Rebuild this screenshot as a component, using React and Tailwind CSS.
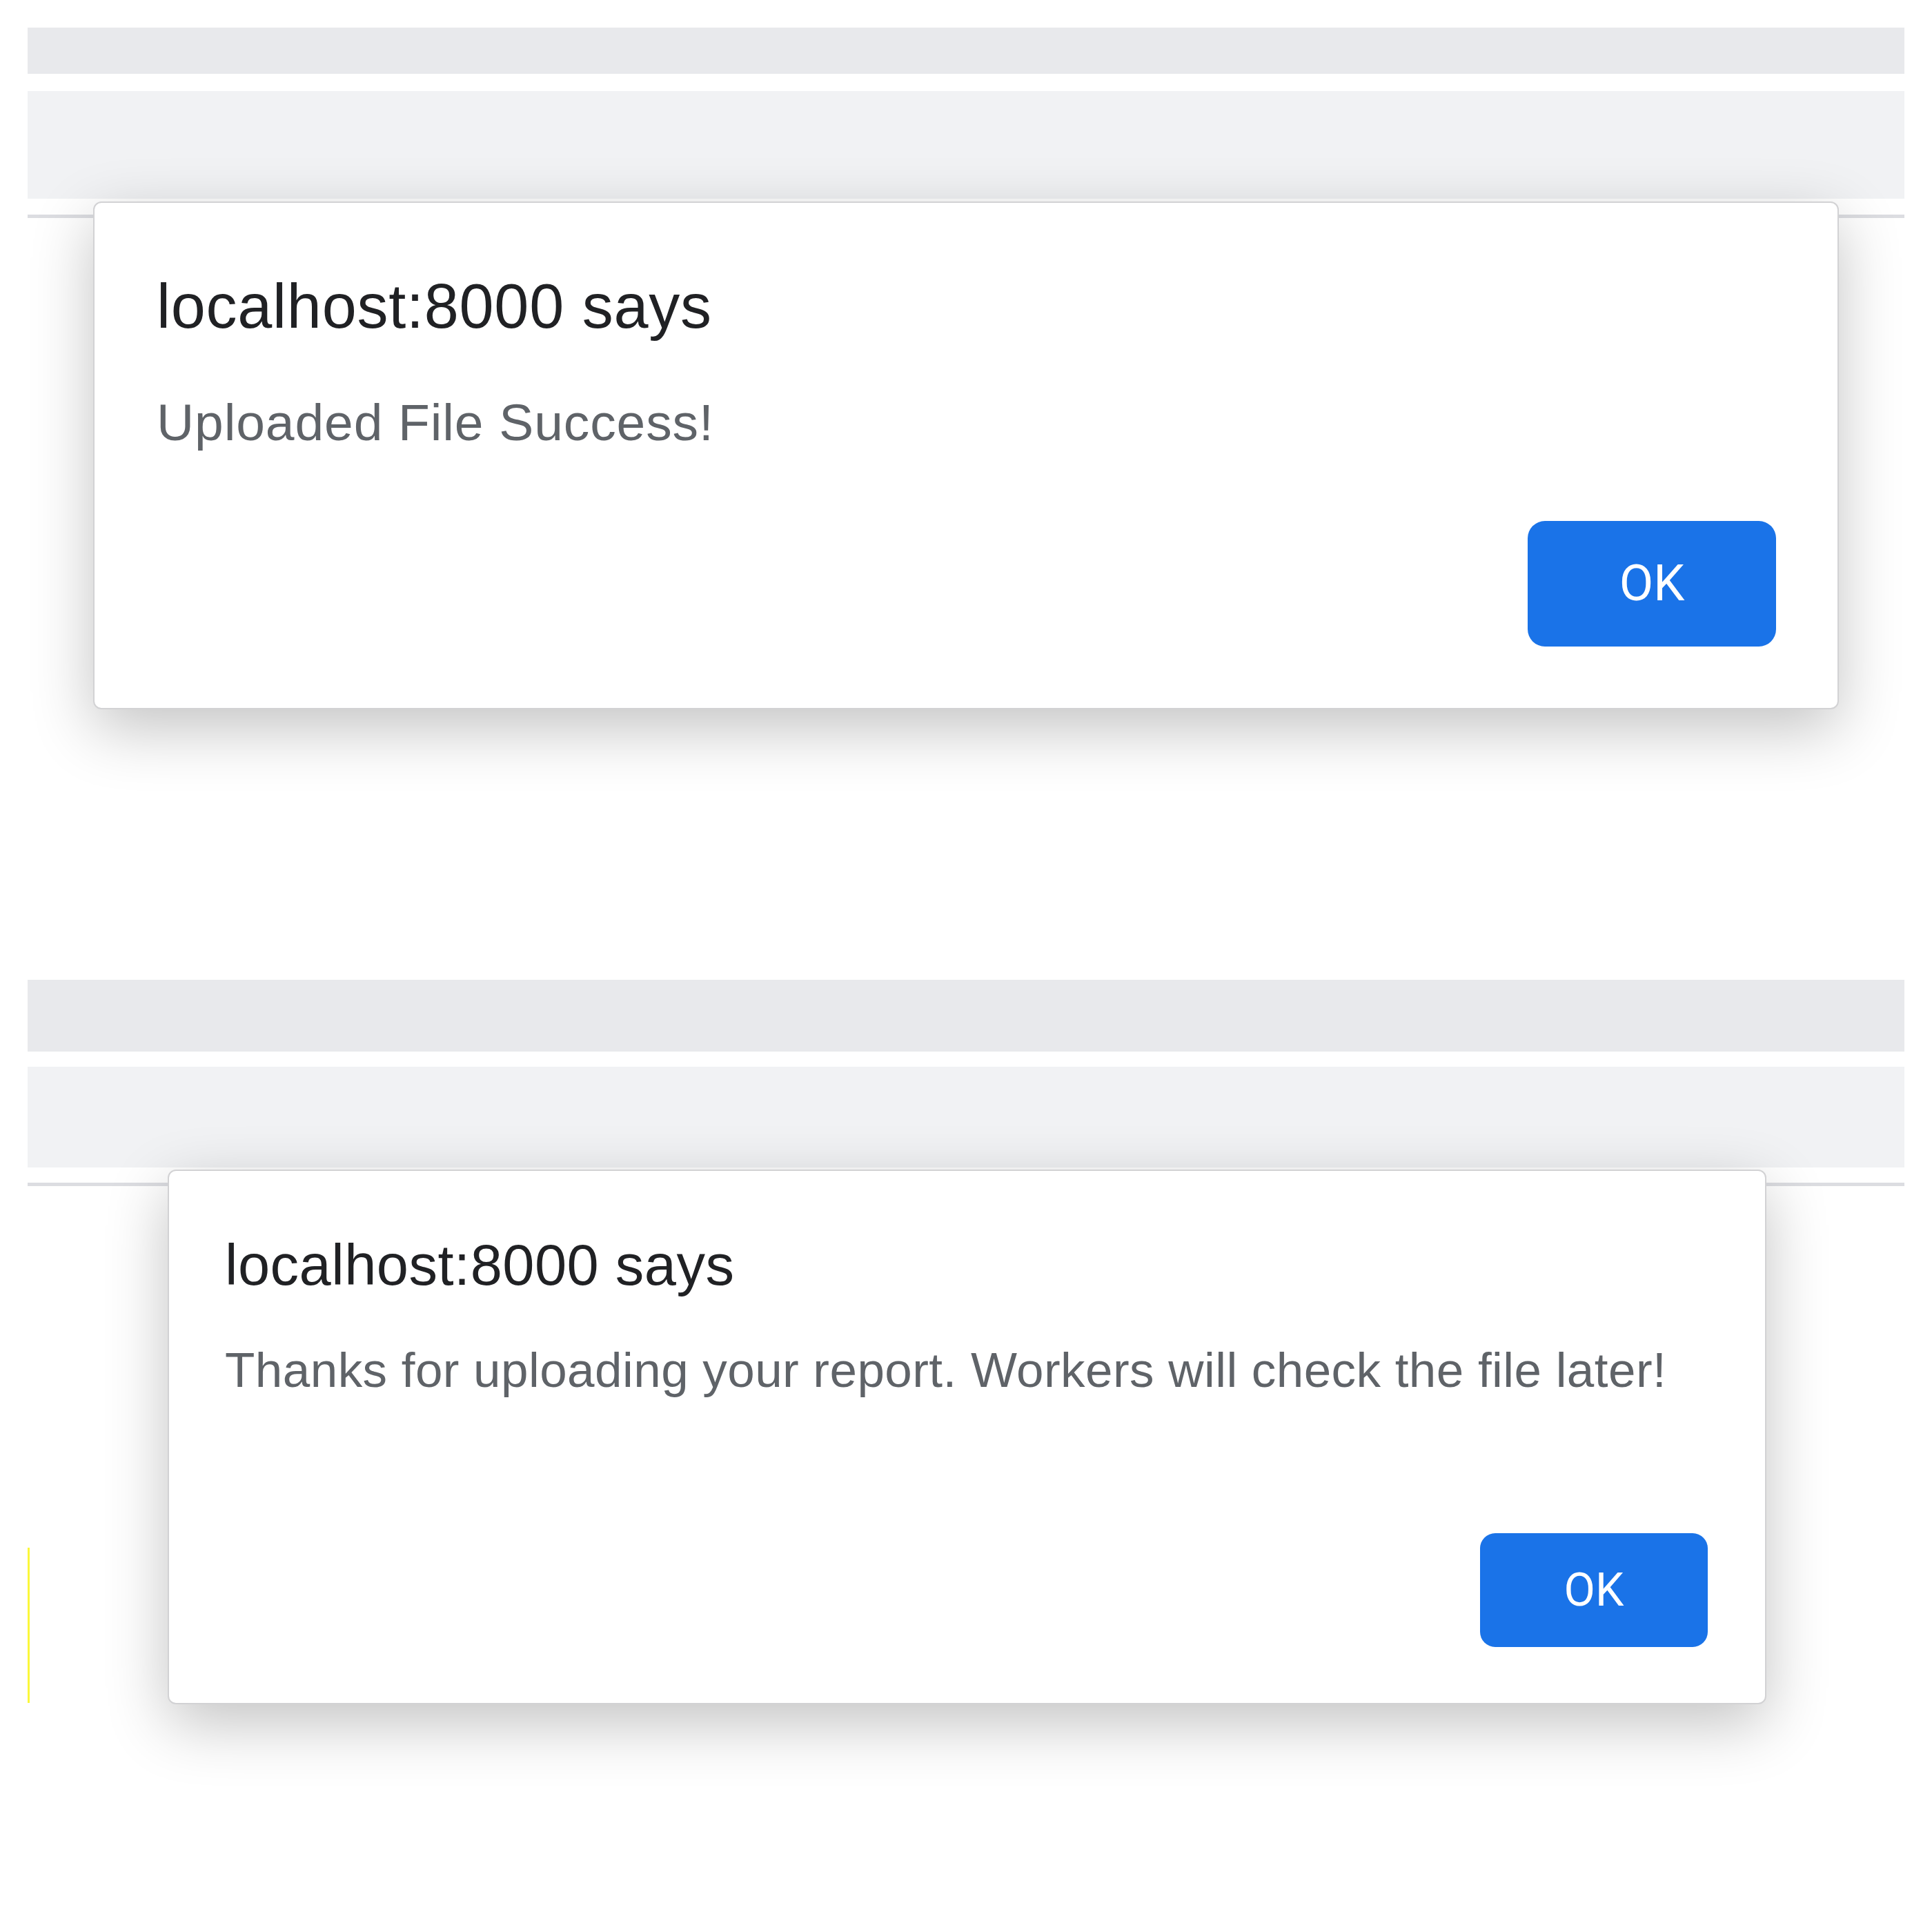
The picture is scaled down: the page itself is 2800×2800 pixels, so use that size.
export default function App() {
  return (
    <div
      className="relative w-[2800px] h-[2800px] bg-white overflow-hidden"
      style={{ fontFamily: '"Liberation Sans", Arial, Helvetica, sans-serif' }}
    >
      {/* Screenshot 1 background page */}
      <div className="flex flex-col px-[40px] pt-[40px]">
        <div className="h-[67px] bg-[#e8e9ec]" />
        <div className="mt-[25px] h-[156px] bg-[#f1f2f4]" />
        <div className="mt-[23px] h-[5px] bg-[#dcdde1]" />
      </div>

      {/* Screenshot 2 background page */}
      <div className="flex flex-col px-[40px] pt-[1104px]">
        <div className="h-[104px] bg-[#e8e9ec]" />
        <div className="mt-[22px] h-[146px] bg-[#f1f2f4]" />
        <div className="mt-[22px] h-[5px] bg-[#dcdde1]" />
      </div>

      {/* yellow marker line */}
      <div className="absolute left-[40px] top-[2243px] w-[3px] h-[225px] bg-[#fbf83a]" />

      {/* Dialog 1 */}
      <div className="absolute left-[135px] top-[292px] w-[2530px] flex flex-col bg-white border-2 border-[#d2d2d4] rounded-[12px] shadow-[0_28px_90px_rgba(0,0,0,0.24)] pl-[90px] pr-[89px] pt-[105px] pb-[89px]">
        <div className="text-[90px] leading-none tracking-[0.75px] text-[#202124]">localhost:8000 says</div>
        <div className="mt-[86px] text-[75px] leading-none tracking-[0.9px] text-[#5f6368]">Uploaded File Success!</div>
        <div className="mt-[105px] flex justify-end">
          <div
            className="w-[360px] h-[182px] rounded-[25px] bg-[#1a73e8] flex items-center justify-center text-white text-[72px] leading-none font-normal"
            style={{ fontFamily: 'Roboto, "Liberation Sans", sans-serif' }}
          >
            OK
          </div>
        </div>
      </div>

      {/* Dialog 2 */}
      <div className="absolute left-[243px] top-[1695px] w-[2317px] flex flex-col bg-white border-2 border-[#d2d2d4] rounded-[12px] shadow-[0_28px_90px_rgba(0,0,0,0.24)] pl-[81px] pr-[83px] pt-[95px] pb-[81px]">
        <div className="text-[83px] leading-none tracking-[0.5px] text-[#202124]">localhost:8000 says</div>
        <div className="mt-[75px] text-[71px] leading-none tracking-[0.45px] text-[#5f6368] whitespace-nowrap">
          Thanks for uploading your report. Workers will check the file later!
        </div>
        <div className="mt-[201px] flex justify-end">
          <div
            className="w-[330px] h-[165px] rounded-[22px] bg-[#1a73e8] flex items-center justify-center text-white text-[66px] leading-none font-normal"
            style={{ fontFamily: 'Roboto, "Liberation Sans", sans-serif' }}
          >
            OK
          </div>
        </div>
      </div>
    </div>
  );
}
